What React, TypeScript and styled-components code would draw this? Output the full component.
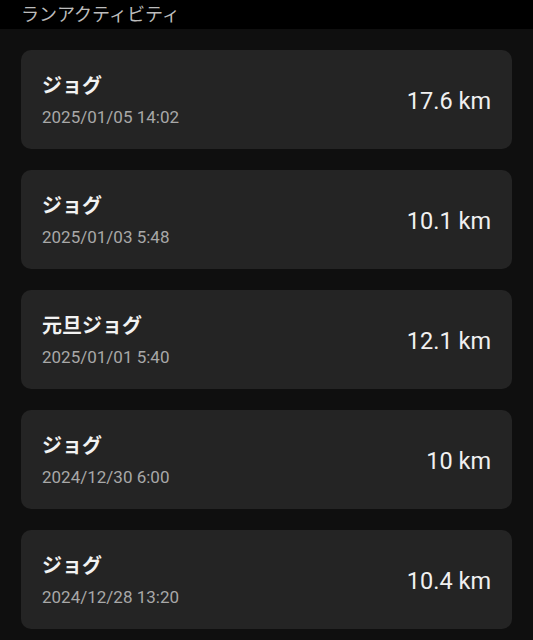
import React from 'react';
import styled, { createGlobalStyle } from 'styled-components';

const GlobalStyle = createGlobalStyle`
  html, body {
    margin: 0;
    padding: 0;
    background: #0f0f0f;
    font-family: Roboto, "Noto Sans CJK JP", sans-serif;
  }
`;

const Page = styled.div`
  width: 533px;
  min-height: 640px;
  background: #0f0f0f;
`;

const Header = styled.div`
  height: 29px;
  background: #000;
  padding-left: 21px;
  display: flex;
  align-items: center;
  color: #bdbdbd;
  font-size: 18px;
  line-height: 1;
`;

const List = styled.div`
  display: flex;
  flex-direction: column;
  gap: 21px;
  padding: 21px 21px 0;
`;

const Card = styled.div`
  height: 99px;
  box-sizing: border-box;
  background: #242424;
  border-radius: 10px;
  padding: 0 21px;
  display: flex;
  align-items: center;
  justify-content: space-between;
`;

const Info = styled.div`
  display: flex;
  flex-direction: column;
  gap: 11px;
  margin-top: 2px;
`;

const Name = styled.div`
  color: #f2f2f2;
  font-size: 20px;
  font-weight: 700;
  line-height: 22px;
`;

const Date = styled.div`
  color: #a8a8a8;
  font-size: 17px;
  line-height: 19px;
`;

const Distance = styled.div`
  color: #f0f0f0;
  font-size: 23.5px;
  line-height: 26px;
  margin-top: 2px;
`;

const runs = [
  { name: 'ジョグ', date: '2025/01/05 14:02', km: '17.6 km' },
  { name: 'ジョグ', date: '2025/01/03 5:48', km: '10.1 km' },
  { name: '元旦ジョグ', date: '2025/01/01 5:40', km: '12.1 km' },
  { name: 'ジョグ', date: '2024/12/30 6:00', km: '10 km' },
  { name: 'ジョグ', date: '2024/12/28 13:20', km: '10.4 km' },
];

const App = () => (
  <Page>
    <GlobalStyle />
    <Header>ランアクティビティ</Header>
    <List>
      {runs.map((r, i) => (
        <Card key={i}>
          <Info>
            <Name>{r.name}</Name>
            <Date>{r.date}</Date>
          </Info>
          <Distance>{r.km}</Distance>
        </Card>
      ))}
    </List>
  </Page>
);

export default App;
